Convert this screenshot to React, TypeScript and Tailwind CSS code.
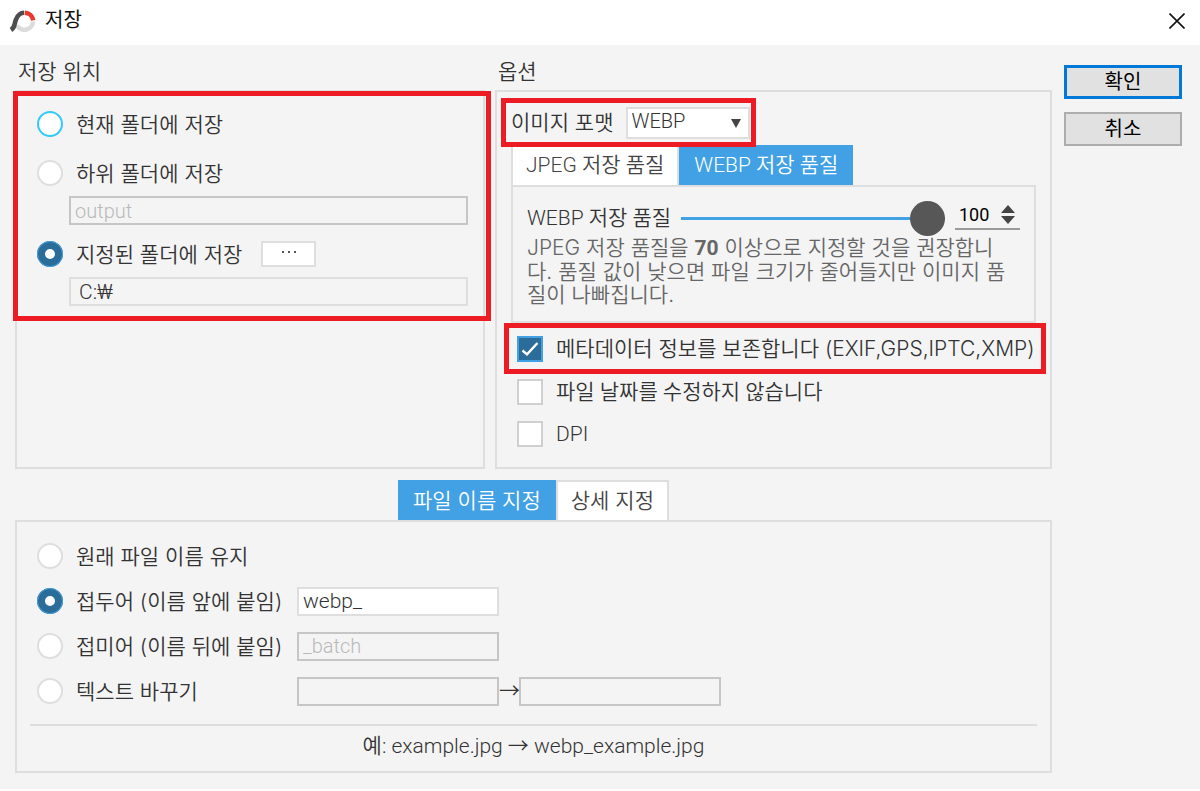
import { useState } from "react";
import type { ReactNode } from "react";

const latinNarrow = "font-['Roboto','Noto_Sans_CJK_KR',sans-serif]";
const latinWide = "font-['Inter','Noto_Sans_CJK_KR',sans-serif]";

const radioClass =
  "size-[26px] shrink-0 appearance-none rounded-full border-2 bg-white checked:border-[8px] checked:border-[#2b6c98] checked:outline checked:outline-1 checked:-outline-offset-1 checked:outline-[#42a1e4]";

const disabledInput =
  "h-[29px] border-2 border-[#c6c6c6] bg-transparent text-[20px] text-[#b9b9b9]";

function Radio({
  id,
  name,
  label,
  checked,
  onSelect,
  highlighted = false,
  labelClass = "",
}: {
  id: string;
  name: string;
  label: string;
  checked: boolean;
  onSelect: (id: string) => void;
  highlighted?: boolean;
  labelClass?: string;
}) {
  return (
    <>
      <input
        id={id}
        type="radio"
        name={name}
        checked={checked}
        onChange={() => onSelect(id)}
        className={`${radioClass} ${highlighted ? "border-[#35c8fb]" : "border-[#dedede]"}`}
      />
      <label htmlFor={id} className={`whitespace-nowrap ${labelClass}`}>
        {label}
      </label>
    </>
  );
}

function Check({ label, defaultChecked = false }: { label: string; defaultChecked?: boolean }) {
  return (
    <label className="flex items-center gap-[13px] whitespace-nowrap">
      <span className="relative flex size-[26px] shrink-0">
        <input
          type="checkbox"
          defaultChecked={defaultChecked}
          className="peer size-[26px] appearance-none border-2 border-[#cfcfcf] bg-white checked:border-[#42a1e4] checked:bg-[#2b6c98]"
        />
        <svg
          viewBox="0 0 26 26"
          className="pointer-events-none absolute inset-0 hidden peer-checked:block"
          fill="none"
          stroke="#fff"
          strokeWidth="2.4"
        >
          <path d="M5.5 14.5 L10 18.3 L20.5 7" />
        </svg>
      </span>
      {label}
    </label>
  );
}

function Tab({ active, onClick, children }: { active: boolean; onClick: () => void; children: ReactNode }) {
  return (
    <button
      type="button"
      role="tab"
      aria-selected={active}
      onClick={onClick}
      className={`h-10 whitespace-nowrap border-2 border-b-0 px-[13px] pb-0.5 ${
        active ? "border-[#42a1e4] bg-[#42a1e4] text-white" : "border-[#dedede] bg-white text-[#444]"
      }`}
    >
      {children}
    </button>
  );
}

function Logo() {
  return (
    <svg viewBox="0 0 28 24" className="h-6 w-7" fill="none" strokeWidth="4.6">
      <path d="M24 12.5 A8.6 8.6 0 0 1 8 16.5" stroke="#dcdcdc" />
      <path d="M2 21 C6.5 18 5 15 7 10.5 C8.6 6.3 11.5 3.9 15.2 3.8" stroke="#4d4d4f" />
      <path d="M15.8 3.8 C20 4 23.6 7 24.2 11.4" stroke="#e8392c" />
    </svg>
  );
}

export default function App() {
  const [location, setLocation] = useState("custom");
  const [naming, setNaming] = useState("prefix");
  const [quality, setQuality] = useState(100);
  const [qualityTab, setQualityTab] = useState("webp");
  const [nameTab, setNameTab] = useState("name");

  return (
    <div className={`bg-white text-[21px] font-[350] leading-[23px] text-[#333] ${latinWide}`}>
      <header className="flex h-[45px] items-center justify-between pb-1 pl-[9px] pr-[14px]">
        <h1 className="flex items-center gap-2 text-[20px] font-normal text-[#111]">
          <Logo />
          저장
        </h1>
        <button type="button" aria-label="닫기" className="p-px">
          <svg viewBox="0 0 16 16" className="size-4" stroke="#111" strokeWidth="1.6">
            <path d="M0.5 0.5 L15.5 15.5 M15.5 0.5 L0.5 15.5" />
          </svg>
        </button>
      </header>

      <div className="flex gap-3 bg-[#f4f4f4] pb-4 pl-[15px] pr-[18px]">
        <main className="min-w-0 flex-1">
          <div className="grid grid-cols-[470fr_557fr] gap-x-[10px]">
            <section className="flex flex-col">
              <h2 className="flex h-[45px] items-center pl-[3px] pt-2">저장 위치</h2>
              <div className="flex-1 border-2 border-[#dedede]">
                <div className="relative pb-[15px] pl-5 pr-[15px] pt-[15px]">
                  <div className="flex h-[34px] items-center gap-[13px]">
                    <Radio id="current" name="location" label="현재 폴더에 저장" checked={location === "current"} onSelect={setLocation} highlighted />
                  </div>
                  <div className="mt-[15px] flex h-[34px] items-center gap-[13px]">
                    <Radio id="sub" name="location" label="하위 폴더에 저장" checked={location === "sub"} onSelect={setLocation} />
                  </div>
                  <div className="mt-[6px] flex pl-8">
                    <input
                      aria-label="하위 폴더 이름"
                      defaultValue="output"
                      disabled
                      className={`w-full px-1 ${disabledInput} ${latinNarrow}`}
                    />
                  </div>
                  <div className="mt-3 flex h-[34px] items-center gap-[13px]">
                    <Radio id="custom" name="location" label="지정된 폴더에 저장" checked={location === "custom"} onSelect={setLocation} labelClass="w-[172px]" />
                    <button
                      type="button"
                      aria-label="폴더 선택"
                      className="flex h-[26px] w-[55px] items-center justify-center gap-1 border-2 border-[#dedede] bg-white pb-1"
                    >
                      <span className="size-0.5 bg-[#555]" />
                      <span className="size-0.5 bg-[#555]" />
                      <span className="size-0.5 bg-[#555]" />
                    </button>
                  </div>
                  <div className="mt-[6px] flex pl-8">
                    <input
                      aria-label="지정된 폴더 경로"
                      defaultValue="C:₩"
                      className={`h-[29px] w-full border-2 border-[#dedede] bg-transparent px-2 ${latinNarrow}`}
                    />
                  </div>
                  <span className="pointer-events-none absolute -left-1 -right-2 -top-px bottom-0 border-[5px] border-[#ed1c24]" />
                </div>
              </div>
            </section>

            <section className="flex flex-col">
              <h2 className="flex h-[45px] items-center pl-[3px] pt-2">옵션</h2>
              <div className="flex-1 border-2 border-[#dedede] pb-[20px]">
                <div className="relative z-10 ml-1 mt-[6px] flex h-[49px] w-fit items-center gap-3 border-[5px] border-[#ed1c24] pl-[5px] pr-px">
                  <label htmlFor="format">이미지 포맷</label>
                  <div className="relative">
                    <select
                      id="format"
                      defaultValue="WEBP"
                      className={`block h-8 w-[124px] appearance-none border-2 border-[#dedede] bg-white pb-0.5 pl-1 text-[20px] ${latinNarrow}`}
                    >
                      <option>WEBP</option>
                      <option>JPEG</option>
                    </select>
                    <svg viewBox="0 0 10 9" className="pointer-events-none absolute right-[9px] top-3 h-[9px] w-[10px]" fill="#444">
                      <path d="M0 0 H10 L5 9 Z" />
                    </svg>
                  </div>
                </div>

                <div role="tablist" className={`-mt-[2px] ml-[14px] flex ${latinNarrow}`}>
                  <Tab active={qualityTab === "jpeg"} onClick={() => setQualityTab("jpeg")}>JPEG 저장 품질</Tab>
                  <Tab active={qualityTab === "webp"} onClick={() => setQualityTab("webp")}>WEBP 저장 품질</Tab>
                </div>
                <div className="ml-[14px] mr-[14px] h-[138px] border-2 border-[#dedede] px-[14px] pt-[13px]">
                  <div className="flex h-9 items-center">
                    <label htmlFor="quality" className={`whitespace-nowrap ${latinNarrow}`}>WEBP 저장 품질</label>
                    <input
                      id="quality"
                      type="range"
                      min={0}
                      max={100}
                      value={quality}
                      onChange={(e) => setQuality(Number(e.target.value))}
                      className="ml-[10px] h-9 min-w-0 flex-1 appearance-none bg-transparent [&::-webkit-slider-runnable-track]:h-[3px] [&::-webkit-slider-runnable-track]:bg-[#42a1e4] [&::-webkit-slider-thumb]:-mt-4 [&::-webkit-slider-thumb]:size-[35px] [&::-webkit-slider-thumb]:appearance-none [&::-webkit-slider-thumb]:rounded-full [&::-webkit-slider-thumb]:bg-[#575757]"
                    />
                    <div className={`ml-[10px] flex h-[30px] w-[65px] items-center justify-between self-start border-b-2 border-[#9a9a9a] pl-1 pr-[5px] ${latinNarrow}`}>
                      <input
                        aria-label="품질 값"
                        value={quality}
                        onChange={(e) => setQuality(Number(e.target.value) || 0)}
                        className="w-9 bg-transparent text-[18px] font-normal text-black"
                      />
                      <span className="flex flex-col gap-[3px]">
                        <button type="button" aria-label="올리기" onClick={() => setQuality((q) => Math.min(100, q + 1))}>
                          <svg viewBox="0 0 14 8" className="block h-2 w-[14px]" fill="#444"><path d="M7 0 L14 8 H0 Z" /></svg>
                        </button>
                        <button type="button" aria-label="내리기" onClick={() => setQuality((q) => Math.max(0, q - 1))}>
                          <svg viewBox="0 0 14 8" className="block h-2 w-[14px]" fill="#444"><path d="M0 0 H14 L7 8 Z" /></svg>
                        </button>
                      </span>
                    </div>
                  </div>
                  <p className="whitespace-nowrap text-[#666]">
                    JPEG 저장 품질을 <b className={`font-bold ${latinNarrow}`}>70</b> 이상으로 지정할 것을 권장합니
                    <br />
                    다. 품질 값이 낮으면 파일 크기가 줄어들지만 이미지 품
                    <br />
                    질이 나빠집니다.
                  </p>
                </div>

                <div className="relative mr-1 ml-[7px] flex h-[51px] items-center border-[5px] border-[#ed1c24] pl-2">
                  <Check label="메타데이터 정보를 보존합니다 (EXIF,GPS,IPTC,XMP)" defaultChecked />
                </div>
                <div className={`ml-5 mt-[5px] flex flex-col gap-4 ${latinNarrow}`}>
                  <Check label="파일 날짜를 수정하지 않습니다" />
                  <Check label="DPI" />
                </div>
              </div>
            </section>
          </div>

          <section>
            <div role="tablist" className="mt-[11px] flex justify-center">
              <Tab active={nameTab === "name"} onClick={() => setNameTab("name")}>파일 이름 지정</Tab>
              <Tab active={nameTab === "detail"} onClick={() => setNameTab("detail")}>상세 지정</Tab>
            </div>
            <div className="border-2 border-[#dedede] px-[13px] pt-[19px]">
              <div className="flex flex-col gap-[15px] pl-[7px]">
                <div className="flex h-[30px] items-center gap-[13px]">
                  <Radio id="keep" name="naming" label="원래 파일 이름 유지" checked={naming === "keep"} onSelect={setNaming} />
                </div>
                <div className="flex h-[30px] items-center gap-[13px]">
                  <Radio id="prefix" name="naming" label="접두어 (이름 앞에 붙임)" checked={naming === "prefix"} onSelect={setNaming} labelClass="w-[208px]" />
                  <input
                    aria-label="접두어"
                    defaultValue="webp_"
                    className={`h-[29px] w-[202px] border-2 border-[#dedede] bg-white px-1 ${latinNarrow}`}
                  />
                </div>
                <div className="flex h-[30px] items-center gap-[13px]">
                  <Radio id="suffix" name="naming" label="접미어 (이름 뒤에 붙임)" checked={naming === "suffix"} onSelect={setNaming} labelClass="w-[208px]" />
                  <input
                    aria-label="접미어"
                    defaultValue="_batch"
                    disabled
                    className={`w-[202px] px-1 ${disabledInput} ${latinNarrow}`}
                  />
                </div>
                <div className="flex h-[30px] items-center gap-[13px]">
                  <Radio id="replace" name="naming" label="텍스트 바꾸기" checked={naming === "replace"} onSelect={setNaming} labelClass="w-[208px]" />
                  <div className="flex items-center">
                    <input aria-label="찾을 텍스트" disabled className={`w-[202px] px-1 ${disabledInput}`} />
                    <span className={`w-5 text-center ${latinNarrow}`}>→</span>
                    <input aria-label="바꿀 텍스트" disabled className={`w-[202px] px-1 ${disabledInput}`} />
                  </div>
                </div>
              </div>
              <p className={`mt-[18px] flex h-[47px] items-center justify-center border-t-2 border-[#dedede] pb-1 ${latinNarrow}`}>
                예: example.jpg → webp_example.jpg
              </p>
            </div>
          </section>
        </main>

        <aside className="flex w-[118px] flex-col gap-[13px] pt-5 text-[20px] font-normal text-black">
          <button type="button" className="h-[34px] border-[3px] border-[#0078d7] bg-[#e1e1e1]">확인</button>
          <button type="button" className="h-[34px] border-2 border-[#adadad] bg-[#e1e1e1]">취소</button>
        </aside>
      </div>
    </div>
  );
}
